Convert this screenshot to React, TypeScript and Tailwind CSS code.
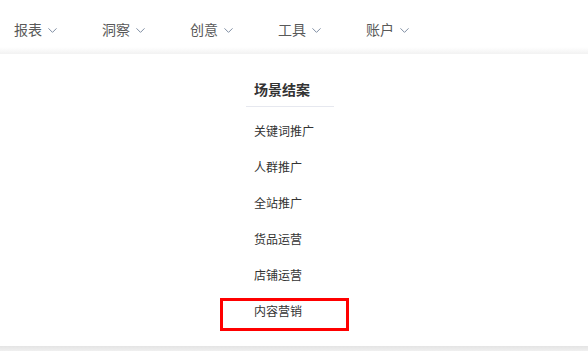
import { ChevronDown } from 'lucide-react';

const NAV = ['报表', '洞察', '创意', '工具', '账户'];

const ITEMS = ['关键词推广', '人群推广', '全站推广', '货品运营', '店铺运营', '内容营销'];

export default function App() {
  return (
    <div
      className="w-[588px] h-[351px] bg-white overflow-hidden flex flex-col"
      style={{ fontFamily: '"Liberation Sans", "Noto Sans CJK SC", sans-serif' }}
    >
      {/* Top nav */}
      <div className="h-[50px] pt-[20px] pl-[14px] flex items-start">
        {NAV.map((n) => (
          <div key={n} className="w-[88px] h-[20px] flex items-center gap-[3px]">
            <span className="text-[14px] leading-[20px] text-[#595959]">{n}</span>
            <ChevronDown size={15} strokeWidth={1.6} className="text-[#7f8ea3]" />
          </div>
        ))}
      </div>
      <div className="h-[7px] bg-gradient-to-b from-white to-[#f2f2f2]" />

      {/* Dropdown panel */}
      <div className="flex-1 flex pl-[246px] pt-[24px] pb-[16px]">
        <div className="w-[88px] flex flex-col">
          <div className="pb-[4px] border-b border-[#e6e8ef] pl-[8px]">
            <span className="text-[14px] leading-[20px] font-bold text-[#333]">场景结案</span>
          </div>
          <div className="mt-[7px] flex flex-col">
            {ITEMS.map((it, i) => (
              <div key={it} className="relative h-[36px] flex items-center pl-[8px]">
                <span className="text-[12px] leading-[16px] text-[#333]">{it}</span>
                {i === ITEMS.length - 1 && (
                  <div className="absolute left-[-26px] top-[4px] w-[129px] h-[33px] border-[3px] border-[#ff0000] pointer-events-none" />
                )}
              </div>
            ))}
          </div>
        </div>
      </div>

      <div className="h-[6px] bg-gradient-to-b from-[#e4e4e4] to-[#f0f0f0]" />
    </div>
  );
}
